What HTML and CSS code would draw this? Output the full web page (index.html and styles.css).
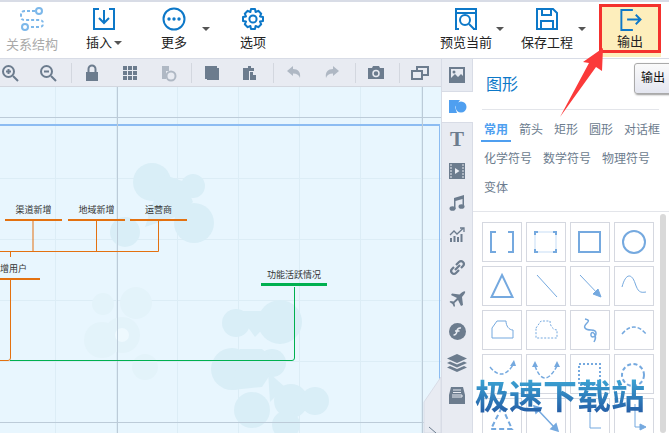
FILE: index.html
```html
<!DOCTYPE html>
<html lang="zh">
<head>
  <meta charset="UTF-8">
  <title>输出</title>
  <link rel="stylesheet" href="styles.css">
</head>
<body>
  <div class="app">
    <div class="toolbar">
      <div class="tool tool-off">
        <svg width="26" height="26" viewBox="0 0 26 26" fill="none" stroke="#7db8ea" stroke-width="2"><circle cx="20" cy="4" r="3"/><circle cx="6" cy="20" r="3"/><path d="M16 4H6Q2 4 2 8V10Q2 13 6 13H20Q24 13 24 16V17Q24 20 20 20H10" stroke-dasharray="3 2"/></svg>
        <span>关系结构</span>
      </div>
      <div class="tool tool-insert">
        <svg width="24" height="24" viewBox="0 0 24 24" fill="none" stroke="#0d78c8" stroke-width="2"><path d="M7 2H2V22H22V2H17M12 3V16M7 11L12 16L17 11"/></svg>
        <span>插入<i class="caret-inline"></i></span>
      </div>
      <div class="tool tool-more">
        <svg width="24" height="24" viewBox="0 0 24 24"><circle cx="12" cy="12" r="10.5" fill="none" stroke="#0d78c8" stroke-width="2"/><circle cx="7" cy="12" r="1.7" fill="#0d78c8"/><circle cx="12" cy="12" r="1.7" fill="#0d78c8"/><circle cx="17" cy="12" r="1.7" fill="#0d78c8"/></svg>
        <span>更多</span>
      </div>
      <i class="caret caret-more"></i>
      <div class="tool tool-options">
        <svg width="24" height="24" viewBox="0 0 24 24" fill="none" stroke="#0d78c8" stroke-width="2"><circle cx="12" cy="12" r="3.6"/><path d="M10 2H14L14.6 5L17.3 3.8L20.2 6.7L19 9.4L22 10V14L19 14.6L20.2 17.3L17.3 20.2L14.6 19L14 22H10L9.4 19L6.7 20.2L3.8 17.3L5 14.6L2 14V10L5 9.4L3.8 6.7L6.7 3.8L9.4 5Z" stroke-linejoin="round"/></svg>
        <span>选项</span>
      </div>
      <div class="spacer"></div>
      <div class="tool">
        <svg width="24" height="24" viewBox="0 0 24 24" fill="none" stroke="#0d78c8" stroke-width="2"><path d="M2 6H22V2H2V22H5M19 22H22V6"/><circle cx="11" cy="13" r="5"/><path d="M15 17L20 22"/></svg>
        <span>预览当前</span>
      </div>
      <i class="caret caret-preview"></i>
      <div class="tool tool-save">
        <svg width="24" height="24" viewBox="0 0 24 24" fill="none" stroke="#0d78c8" stroke-width="2"><path d="M2 2H18L22 6V22H2ZM7 2V8H16V2M6 22V14H18V22"/></svg>
        <span>保存工程</span>
      </div>
      <i class="caret"></i>
      <div class="tool tool-output">
        <svg width="24" height="24" viewBox="0 0 24 24" fill="none" stroke="#0d78c8" stroke-width="2"><path d="M15 2H3V23H15M9 12H23M18 7L23 12L18 17"/></svg>
        <span>输出</span>
      </div>
    </div>

    <div class="main">
      <div class="editor">
        <div class="subbar">
          <svg class="ico" viewBox="0 0 18 18" fill="none" stroke="#6c7c8e" stroke-width="2"><circle cx="7.5" cy="7.5" r="5.5"/><path d="M12 12L17 17M5 7.5H10M7.5 5V10"/></svg>
          <svg class="ico" viewBox="0 0 18 18" fill="none" stroke="#6c7c8e" stroke-width="2"><circle cx="7.5" cy="7.5" r="5.5"/><path d="M12 12L17 17M5 7.5H10"/></svg>
          <b class="sep"></b>
          <svg class="ico" viewBox="0 0 18 18" fill="#6c7c8e"><path d="M3 8H15V17H3Z"/><path d="M5.5 8V5A3.5 3.5 0 0 1 12.5 5V8" fill="none" stroke="#6c7c8e" stroke-width="2"/></svg>
          <svg class="ico" viewBox="0 0 18 18" fill="#6c7c8e"><path d="M2 2H16V16H2Z"/><path d="M6.5 2V16M11.5 2V16M2 6.5H16M2 11.5H16" stroke="#e8ebf2" stroke-width="1"/></svg>
          <svg class="ico ico-off" viewBox="0 0 18 18" fill="#6c7c8e"><path d="M3 2H10V7H7V15H3Z"/><circle cx="12" cy="12" r="4.5" fill="none" stroke="#6c7c8e" stroke-width="2"/></svg>
          <b class="sep"></b>
          <svg class="ico" viewBox="0 0 18 18" fill="#6c7c8e"><path d="M2 2H14V4H4V15H2Z"/><path d="M4 4H16V16H4Z"/></svg>
          <svg class="ico" viewBox="0 0 18 18" fill="#6c7c8e"><path d="M2 4H7V2H10V4H13V7H8V16H2Z"/><path d="M9 8H12V11H15V16H9Z"/></svg>
          <b class="sep"></b>
          <svg class="ico ico-off" viewBox="0 0 18 18" fill="#6c7c8e"><path d="M2 7L8 2V5C13 5 16 8 15 14C14 11 12 9.500 8 9.500V12Z"/></svg>
          <svg class="ico ico-off" viewBox="0 0 18 18" fill="#6c7c8e"><path d="M16 7L10 2V5C5 5 2 8 3 14C4 11 6 9.500 10 9.500V12Z"/></svg>
          <b class="sep"></b>
          <svg class="ico" viewBox="0 0 18 18" fill="#6c7c8e"><path d="M1 4H5L6 2H12L13 4H17V15H1Z"/><circle cx="9" cy="9.500" r="3" fill="none" stroke="#e8ebf2" stroke-width="1.500"/></svg>
          <b class="sep"></b>
          <svg class="ico" viewBox="0 0 18 18" fill="none" stroke="#6c7c8e" stroke-width="2"><path d="M1 7H11V15H1ZM6 7V3H17V11H11"/></svg>
        </div>

        <div class="canvas">
          <!-- bubbles behind the mind map -->
          <svg class="bubbles" width="441" height="346" viewBox="0 0 441 346">
            <g fill="#d9eef7">
              <circle cx="152" cy="95" r="19"/><circle cx="193" cy="99" r="12"/><circle cx="194" cy="136" r="20"/><circle cx="125" cy="145" r="15"/><circle cx="156" cy="125" r="9"/>
              <path d="M165 88L185 95L193 115L175 130L145 140L155 110Z"/>
              <circle cx="236" cy="236" r="14"/><circle cx="280" cy="235" r="22"/><circle cx="232" cy="282" r="21"/><circle cx="272" cy="276" r="14"/>
              <path d="M240 262L262 262L278 276L262 300L232 303Z"/><path d="M236 224L280 224L255 250Z"/>
              <circle cx="291" cy="314" r="17"/><circle cx="315" cy="314" r="14"/><circle cx="252" cy="323" r="18"/><circle cx="286" cy="338" r="14"/>
              <path d="M268 285L285 300L270 315Z"/>
            </g>
            <g fill="#e3f3fa">
              <circle cx="103" cy="217" r="11"/><circle cx="136" cy="216" r="16"/><circle cx="102" cy="253" r="18"/><circle cx="122" cy="248" r="18"/><circle cx="145" cy="280" r="13"/>
            </g>
            <circle cx="122" cy="248" r="7" fill="#eef9fe"/>
          </svg>
          <div class="guide-h guide-top"></div>
          <div class="guide-blue"></div>
          <div class="guide-h guide-bottom"></div>
          <div class="guide-v guide-left"></div>
          <div class="guide-v guide-right"></div>
          <div class="guide-edge"></div>

          <div class="node orange" style="left:5px;top:116px;width:57px">渠道新增</div>
          <div class="node orange" style="left:68px;top:116px;width:57px">地域新增</div>
          <div class="node orange" style="left:130px;top:116px;width:57px">运营商</div>
          <div class="node orange" style="left:-22px;top:175px;width:62px">新增用户</div>
          <div class="node green" style="left:261px;top:181px;width:66px">功能活跃情况</div>

          <svg class="links" width="441" height="346" viewBox="0 0 441 346" fill="none">
            <path d="M33 133V164.500M96.500 133V164.500M158.500 133V164.500M0 164.500H158.500M10.500 164.500V170M10.500 193V271Q10.500 273.500 8 273.500H0" stroke="#e37110" stroke-width="1"/>
            <path d="M10 273.500H292Q294.500 273.500 294.500 271V200" stroke="#00b050" stroke-width="1"/>
          </svg>
          <svg class="corner" width="18" height="56" viewBox="0 0 18 56"><path d="M18 0L1 25V56H18Z" fill="#e8ebf2" stroke="#d8dce6"/><path d="M6 50L13 56" stroke="#6c7c8e"/></svg>
        </div>
      </div>

      <div class="rail">
        <div class="rail-btn">
          <svg width="18" height="18" viewBox="0 0 18 18" fill="#6c7c8e"><path d="M1 1H17V17H1ZM3 3V12L7 8L10 11L13 8L15 10V3Z"/><circle cx="6" cy="6" r="1.500"/></svg>
        </div>
        <div class="rail-btn rail-on">
          <svg width="18" height="16" viewBox="0 0 18 16"><path d="M0 1H11L6 8L8 14H0Z" fill="#4f9ff0"/><circle cx="12" cy="8" r="5.500" fill="#4f9ff0"/></svg>
        </div>
        <div class="rail-btn rail-t">T</div>
        <div class="rail-btn">
          <svg width="16" height="16" viewBox="0 0 16 16" fill="#6c7c8e"><path d="M0 0H16V16H0Z"/><path d="M6 5L10.500 8L6 11Z" fill="#e8ebf2"/><path d="M1 2H3M1 5H3M1 8H3M1 11H3M1 14H3M13 2H15M13 5H15M13 8H15M13 11H15M13 14H15" stroke="#e8ebf2" stroke-width="1"/></svg>
        </div>
        <div class="rail-btn">
          <svg width="16" height="16" viewBox="0 0 16 16" fill="#6c7c8e"><path d="M5 3L15 0V12H13.500V4L6.500 6V14H5Z"/><ellipse cx="3.500" cy="13.500" rx="3" ry="2.300"/><ellipse cx="12.500" cy="11.500" rx="3" ry="2.300"/></svg>
        </div>
        <div class="rail-btn">
          <svg width="16" height="16" viewBox="0 0 16 16" fill="#6c7c8e"><path d="M1 11H3V15H1ZM4.500 9H6.500V15H4.500ZM8 10H10V15H8ZM11.500 7H13.500V15H11.500Z"/><path d="M1 8L5 4L8 7L14 1.500M11 1H15V5" fill="none" stroke="#6c7c8e" stroke-width="1.300"/></svg>
        </div>
        <div class="rail-btn">
          <svg width="17" height="17" viewBox="0 0 17 17" fill="none" stroke="#6c7c8e" stroke-width="2.200"><path d="M7 6L10 3Q12 1 14 3T14 7L12 9M10 11L7 14Q5 16 3 14T3 10L5 8M6 11L11 6"/></svg>
        </div>
        <div class="rail-btn">
          <svg width="17" height="17" viewBox="0 0 17 17" fill="#6c7c8e"><path d="M16 0.500Q17 1.500 13 6L14 14L12 15L9 9L5.500 12L6 15L5 16L3.500 13L0.500 11L1.500 10L4.500 10.500L8 7L2 4L3 2.500L10.500 3.500Q15 -0.500 16 0.500Z"/></svg>
        </div>
        <div class="rail-btn">
          <svg width="17" height="17" viewBox="0 0 17 17"><circle cx="8.500" cy="8.500" r="8.500" fill="#6c7c8e"/><path d="M12 5Q8.500 4.500 8 8Q7.500 12 4.500 12M6 8H10.500" fill="none" stroke="#e8ebf2" stroke-width="1.600"/></svg>
        </div>
        <div class="rail-btn">
          <svg width="20" height="18" viewBox="0 0 20 18" fill="#6c7c8e"><path d="M10 0L20 4.500L10 9L0 4.500Z"/><path d="M3 7.500L10 10.500L17 7.500L20 9L10 13.500L0 9Z"/><path d="M3 12L10 15L17 12L20 13.500L10 18L0 13.500Z"/></svg>
        </div>
        <div class="rail-btn">
          <svg width="16" height="17" viewBox="0 0 16 17" fill="#6c7c8e"><path d="M0 8L2 0H14L16 8V17H0Z"/><path d="M4 3H12M4 5.500H12M3 8H13V10H3" fill="none" stroke="#e8ebf2" stroke-width="1"/></svg>
        </div>
      </div>

      <div class="panel">
        <div class="panel-title">图形</div>
        <div class="tabs">
          <span class="tab tab-on">常用</span><span class="tab">箭头</span><span class="tab">矩形</span><span class="tab">圆形</span><span class="tab">对话框</span>
          <span class="tab">化学符号</span><span class="tab">数学符号</span><span class="tab">物理符号</span>
          <span class="tab">变体</span>
        </div>
        <div class="shapes">
          <div class="shape"><svg viewBox="0 0 40 40" fill="none" stroke="#75a9df" stroke-width="2"><path d="M14 10H9V30H14M26 10H31V30H26"/></svg></div>
          <div class="shape"><svg viewBox="0 0 40 40" fill="none" stroke="#75a9df" stroke-width="2"><rect x="9" y="10" width="21" height="20" stroke="#e3eefa"/><path d="M9 13V10H12M27 10H30V13M30 27V30H27M12 30H9V27"/></svg></div>
          <div class="shape"><svg viewBox="0 0 40 40" fill="none" stroke="#75a9df" stroke-width="2"><rect x="9" y="10" width="21" height="20"/></svg></div>
          <div class="shape"><svg viewBox="0 0 40 40" fill="none" stroke="#75a9df" stroke-width="2"><circle cx="20" cy="20" r="11"/></svg></div>
          <div class="shape"><svg viewBox="0 0 40 40" fill="none" stroke="#75a9df" stroke-width="2"><path d="M20 9L30.500 31H9.500Z"/></svg></div>
          <div class="shape"><svg viewBox="0 0 40 40" fill="none" stroke="#75a9df"><path d="M11 9L31 31"/></svg></div>
          <div class="shape"><svg viewBox="0 0 40 40" fill="none" stroke="#75a9df"><path d="M10 9L30 30"/><path d="M31 31L23 28L28 23Z" fill="#75a9df"/></svg></div>
          <div class="shape"><svg viewBox="0 0 40 40" fill="none" stroke="#75a9df"><path d="M8 21C12 6 18 8 21 17S26 27 32 26"/></svg></div>
          <div class="shape"><svg viewBox="0 0 40 40" fill="none" stroke="#75a9df"><path d="M10 18L15 11H24C24 16 27 20 31 20V28H10Z"/></svg></div>
          <div class="shape"><svg viewBox="0 0 40 40" fill="none" stroke="#75a9df" stroke-dasharray="2 1.500"><path d="M10 18L15 11H24C24 16 27 20 31 20V28H10Z"/></svg></div>
          <div class="shape"><svg viewBox="0 0 40 40" fill="none" stroke="#75a9df" stroke-width="1.500"><path d="M15 9C24 11 12 14 15 18S26 18 26 23S20 28 21 24S28 25 24 32"/></svg></div>
          <div class="shape"><svg viewBox="0 0 40 40" fill="none" stroke="#75a9df" stroke-width="1.500" stroke-dasharray="4 2"><path d="M8 24Q20 10 32 24"/></svg></div>
          <div class="shape"><svg viewBox="0 0 40 40" fill="none" stroke="#75a9df" stroke-width="1.500" stroke-dasharray="4 2"><path d="M8 13Q20 28 31 11"/><path d="M32 6L28 12H34Z" fill="#75a9df" stroke="none"/></svg></div>
          <div class="shape"><svg viewBox="0 0 40 40" fill="none" stroke="#75a9df" stroke-width="1.500"><path d="M9 12Q18 36 31 12" stroke-dasharray="4 2"/><path d="M9 7L6 13H12ZM31 7L28 13H34Z" fill="#75a9df" stroke="none"/></svg></div>
          <div class="shape"><svg viewBox="0 0 40 40" fill="none" stroke="#75a9df" stroke-width="2" stroke-dasharray="2 2"><rect x="9" y="10" width="21" height="21"/></svg></div>
          <div class="shape"><svg viewBox="0 0 40 40" fill="none" stroke="#75a9df" stroke-width="2" stroke-dasharray="4 2.500"><circle cx="19" cy="21" r="11"/></svg></div>
          <div class="shape"><svg viewBox="0 0 40 40" fill="none" stroke="#75a9df" stroke-width="2" stroke-dasharray="5 3"><path d="M20 9L30 31H9Z"/></svg></div>
          <div class="shape"><svg viewBox="0 0 40 40" fill="none" stroke="#75a9df" stroke-width="1.500"><path d="M12 12L29 30"/><path d="M8 8L15 10L10 15ZM32 33L25 31L30 26Z" fill="#75a9df"/></svg></div>
          <div class="shape"><svg viewBox="0 0 40 40" fill="none" stroke="#75a9df"><path d="M20 6V30H31"/></svg></div>
          <div class="shape"><svg viewBox="0 0 40 40" fill="none" stroke="#75a9df"><path d="M21 6V29H28"/><path d="M32 29L26 26V32Z" fill="#75a9df"/></svg></div>
        </div>
        <div class="scroll-thumb"></div>
      </div>
    </div>

    <!-- overlays: tooltip, red annotation, watermark -->
    <div class="tooltip">输出</div>
    <svg class="arrow" width="60" height="80" viewBox="0 0 60 80"><path d="M45 4L25 18L31 19L2 73L38 23L44 27Z" fill="#fb3a3a"/></svg>
    <div class="watermark">极速下载站</div>
  </div>
</body>
</html>
```
FILE: styles.css
```css
* {
  box-sizing: border-box;
}
body {
  margin: 0;
  font-family: "Liberation Sans", "Noto Sans CJK SC", sans-serif;
  overflow: hidden;
}
.app {
  position: relative;
  width: 669px;
  height: 433px;
  overflow: hidden;
  background: white;
}
.toolbar {
  height: 59px;
  display: flex;
  align-items: flex-start;
  border-top: 2px solid #d8dce6;
  border-bottom: 1px solid #d8dce6;
}
.spacer {
  flex: 1;
}
.tool {
  width: 62px;
  flex: none;
  display: flex;
  flex-direction: column;
  align-items: center;
  gap: 3px;
  padding-top: 5px;
  font-size: 13px;
  color: #222;
  height: 56px;
  line-height: 17px;
}
.tool-off {
  width: 64px;
  color: #aaa;
}
.tool-insert {
  width: 64px;
  margin-left: 8px;
}
.tool-more {
  margin-left: 7px;
}
.tool-options {
  margin-left: 12px;
}
.tool-save {
  margin-left: 12px;
}
.tool-output {
  margin: 2px 8px 0 13px;
  height: 49px;
  gap: 2px;
  padding-top: 1px;
  background: #fdeebc;
  border: 3px solid #f4312d;
  box-shadow: 0 4px 0 #fdeebc;
}
.caret {
  flex: none;
  width: 0;
  height: 0;
  margin-top: 25px;
  border: 4px solid transparent;
  border-top: 4px solid #555;
  border-bottom: 0;
}
.caret-more {
  margin-left: -3px;
}
.caret-preview {
  margin-left: -1px;
}
.caret-inline {
  display: inline-block;
  margin-left: 2px;
  vertical-align: 2px;
  border: 4px solid transparent;
  border-top: 4px solid #555;
  border-bottom: 0;
}
.main {
  display: flex;
  height: 374px;
}
.editor {
  width: 441px;
  flex: none;
  display: flex;
  flex-direction: column;
}
.subbar {
  height: 28px;
  flex: none;
  background: #e8ebf2;
  border-bottom: 1px solid #d3d7df;
  display: flex;
  align-items: center;
  gap: 20px;
  padding-left: 1px;
}
.ico {
  width: 18px;
  height: 18px;
  flex: none;
}
.ico-off {
  opacity: 0.45;
}
.sep {
  width: 1px;
  height: 20px;
  flex: none;
  margin: 0 -9px 0 -6px;
  background: #d3d7df;
}
.canvas {
  position: relative;
  flex: 1;
  overflow: hidden;
  background-color: #e8f6fe;
  background-image:
    linear-gradient(#dcedf6 1px, transparent 1px),
    linear-gradient(90deg, #dcedf6 1px, transparent 1px);
  background-size: 61px 61px;
  background-position: 55px 30px;
}
.bubbles, .links {
  position: absolute;
  left: 0;
  top: 0;
}
.corner {
  position: absolute;
  right: 0;
  bottom: 0;
}
.guide-h {
  position: absolute;
  left: 0;
  right: 0;
  height: 1px;
  background: #bccbd8;
}
.guide-top {
  top: 30px;
}
.guide-bottom {
  top: 335px;
}
.guide-blue {
  position: absolute;
  left: 0;
  right: 2px;
  top: 37px;
  height: 2px;
  background: #8cbcf2;
}
.guide-v {
  position: absolute;
  top: 0;
  bottom: 0;
  width: 1px;
  background: #bccbd8;
}
.guide-left {
  left: 117px;
}
.guide-right {
  left: 422px;
}
.guide-edge {
  position: absolute;
  left: 439px;
  top: 37px;
  bottom: 0;
  width: 1px;
  background: #8cbcf2;
}
.node {
  position: absolute;
  font-size: 9px;
  line-height: 14px;
  height: 18px;
  text-align: center;
  color: #333;
  white-space: nowrap;
}
.orange {
  border-bottom: 2px solid #e37110;
}
.green {
  border-bottom: 3px solid #00b050;
}
.rail {
  width: 32px;
  flex: none;
  background: #e8ebf2;
  border-left: 1px solid #d8dce6;
  border-right: 1px solid #d8dce6;
  display: flex;
  flex-direction: column;
}
.rail-btn {
  height: 32px;
  flex: none;
  display: flex;
  align-items: center;
  justify-content: center;
}
.rail-on {
  background: white;
  margin-right: -1px;
  border-top: 1px solid #d8dce6;
  border-bottom: 1px solid #d8dce6;
}
.rail-t {
  font-family: "Liberation Serif", serif;
  font-size: 21px;
  font-weight: bold;
  color: #6c7c8e;
}
.panel {
  position: relative;
  flex: 1;
  background: white;
  padding: 16px 0 0 9px;
  overflow: hidden;
}
.panel-title {
  font-size: 16px;
  line-height: 20px;
  color: #0d78c8;
  padding-left: 4px;
  height: 35px;
  border-bottom: 1px solid #e3e5ea;
  width: 177px;
}
.tabs {
  display: flex;
  flex-wrap: wrap;
  align-content: flex-start;
  column-gap: 11px;
  padding: 10px 0 0 2px;
  height: 101px;
  width: 190px;
  font-size: 12px;
  line-height: 20px;
  color: #6c7c8e;
}
.tab {
  height: 29px;
  white-space: nowrap;
}
.tab-on {
  color: #4f9ff0;
  font-weight: bold;
  padding: 0 3px;
  margin: 0 -3px;
  box-shadow: 0 -7px 0 white inset, 0 -9px 0 #4f9ff0 inset;
}
.shapes {
  margin-left: -9px;
  width: 197px;
  border-top: 1px solid #e3e5ea;
  padding: 10px 0 0 9px;
  display: grid;
  grid-template-columns: repeat(4, 40px);
  grid-auto-rows: 40px;
  gap: 4px;
}
.shape {
  border: 1px solid #d5d8e0;
  background: white;
}
.shape svg {
  display: block;
  width: 40px;
  height: 40px;
  margin: -1px;
}
.scroll-thumb {
  position: absolute;
  right: 3px;
  top: 155px;
  bottom: 0;
  width: 6px;
  border-radius: 3px;
  background: #d9d9d9;
}
.tooltip {
  position: absolute;
  left: 634px;
  top: 63px;
  width: 40px;
  height: 31px;
  border: 1px solid #aaa;
  border-radius: 3px;
  background: linear-gradient(#fafafa, #e4e6f0);
  box-shadow: 1px 1px 2px #999;
  font-size: 12px;
  line-height: 29px;
  padding-left: 6px;
  color: #111;
}
.arrow {
  position: absolute;
  left: 558px;
  top: 44px;
}
.watermark {
  position: absolute;
  left: 475px;
  top: 373px;
  font-family: "Noto Sans CJK SC", sans-serif;
  font-size: 34px;
  line-height: 44px;
  font-weight: bold;
  color: transparent;
  background: linear-gradient(#3fb0dc, #2255a0);
  -webkit-background-clip: text;
  background-clip: text;
}
```
